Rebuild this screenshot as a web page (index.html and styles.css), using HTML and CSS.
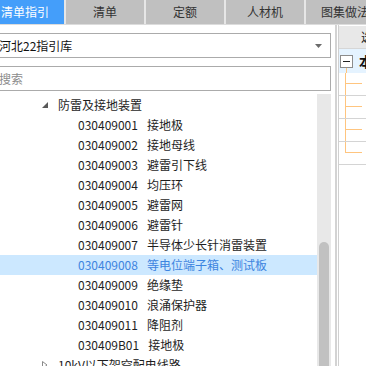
FILE: index.html
```html
<!DOCTYPE html>
<html lang="zh-CN">
<head>
    <meta charset="UTF-8">
    <title>清单指引</title>
    <link rel="stylesheet" href="styles.css">
</head>
<body>
<div class="app">

    <!-- Tabs -->
    <div class="tabs">
        <div class="tab active">清单指引</div>
        <div class="tab">清单</div>
        <div class="tab">定额</div>
        <div class="tab">人材机</div>
        <div class="tab">图集做法</div>
    </div>

    <div class="main">
        <!-- Left: guide library tree -->
        <div class="left">
            <div class="select">
                <span>河北22指引库</span>
                <svg class="select-arrow" width="7" height="4" viewBox="0 0 7 4"><path d="M0 0H7L3.5 4Z" fill="#6b6b6b"/></svg>
            </div>
            <div class="search">搜索</div>

            <div class="tree-wrap">
                <ul class="tree">
                    <li class="row level1">
                        <svg class="twisty" width="6" height="6" viewBox="0 0 6 6"><path d="M6 0V6H0Z" fill="#595959"/></svg>
                        <span>防雷及接地装置</span>
                    </li>
                    <li class="row level2"><span class="code">030409001</span><span class="name">接地极</span></li>
                    <li class="row level2"><span class="code">030409002</span><span class="name">接地母线</span></li>
                    <li class="row level2"><span class="code">030409003</span><span class="name">避雷引下线</span></li>
                    <li class="row level2"><span class="code">030409004</span><span class="name">均压环</span></li>
                    <li class="row level2"><span class="code">030409005</span><span class="name">避雷网</span></li>
                    <li class="row level2"><span class="code">030409006</span><span class="name">避雷针</span></li>
                    <li class="row level2"><span class="code">030409007</span><span class="name">半导体少长针消雷装置</span></li>
                    <li class="row level2 selected"><span class="code">030409008</span><span class="name">等电位端子箱、测试板</span></li>
                    <li class="row level2"><span class="code">030409009</span><span class="name">绝缘垫</span></li>
                    <li class="row level2"><span class="code">030409010</span><span class="name">浪涌保护器</span></li>
                    <li class="row level2"><span class="code">030409011</span><span class="name">降阻剂</span></li>
                    <li class="row level2"><span class="code">030409B01</span><span class="name">接地极</span></li>
                    <li class="row level1">
                        <svg class="twisty" width="6" height="8" viewBox="0 0 6 8"><path d="M0.5 0.5L5 4L0.5 7.5Z" fill="none" stroke="#8a8a8a"/></svg>
                        <span>10kV以下架空配电线路</span>
                    </li>
                </ul>
                <div class="scrollbar">
                    <svg class="scroll-up" width="10" height="5" viewBox="0 0 10 5"><path d="M5 0L10 5H0Z" fill="#666a70"/></svg>
                    <div class="thumb"></div>
                </div>
            </div>
        </div>

        <div class="splitter"></div>

        <!-- Right: selected item structure -->
        <div class="right">
            <div class="grid-head">选择</div>
            <div class="grid-row node-row">
                <span class="minus"></span>
                <b>本</b>
            </div>
            <div class="grid-row"><span class="guide"></span></div>
            <div class="grid-row"><span class="guide"></span></div>
            <div class="grid-row"><span class="guide"></span></div>
            <div class="grid-row"><span class="guide last"></span></div>
        </div>
    </div>
</div>
</body>
</html>
```

FILE: styles.css
```css
html, body {
    margin: 0;
    padding: 0;
    width: 366px;
    height: 366px;
    overflow: hidden;
    background: #fff;
}

body {
    font-family: "Noto Sans CJK SC", "Noto Sans", sans-serif;
    font-size: 12px;
    color: #1e1e1e;
}

/* the window is scrolled a little to the right */
.app {
    width: 380px;
    margin-left: -14px;
}

/* Tabs */
.tabs {
    display: flex;
    gap: 2px;
    height: 24px;
    background: #e6e6e6;
    border-bottom: 1px solid #dcdcdc;
}

.tab {
    width: 78px;
    flex-shrink: 0;
    background: #c0c0c0;
    color: #333;
    text-align: center;
    line-height: 24px;
    white-space: nowrap;
}

.tab.active {
    background: #449efa;
    color: #fff;
}

.main {
    display: flex;
    height: 341px;
}

/* Left panel */
.left {
    width: 349px;
    flex-shrink: 0;
    display: flex;
    flex-direction: column;
}

.select, .search {
    height: 23px;
    margin: 8px 4px 0 2px;
    border: 1px solid #ababab;
    display: flex;
    align-items: center;
    padding-left: 10px;
    line-height: 23px;
}

.select {
    justify-content: space-between;
    padding-right: 8px;
    color: #111;
}

.select-arrow {
    margin-top: 1px;
}

.search {
    color: #8c8c8c;
}

.tree-wrap {
    flex: 1;
    display: flex;
    margin: 3px 4px 0 2px;
    overflow: hidden;
}

.tree {
    list-style: none;
    margin: 0;
    padding: 1px 0 0;
    flex: 1;
    min-width: 0;
}

.row {
    height: 20px;
    line-height: 20px;
    display: flex;
    align-items: center;
    white-space: nowrap;
}

.row.level1 {
    padding-left: 54px;
}

.row.level1 .twisty {
    width: 6px;
    margin-right: 10px;
    flex-shrink: 0;
}

.row.level2 {
    padding-left: 90px;
}

.row .name {
    margin-left: 9px;
}

.row.selected {
    background: #cce8ff;
    color: #3d84e0;
}

.scrollbar {
    width: 14px;
    flex-shrink: 0;
    background: #e8e8e8;
    display: flex;
    flex-direction: column;
    align-items: center;
}

.scroll-up {
    margin-top: 4px;
    margin-left: 1px;
}

.thumb {
    width: 10px;
    height: 140px;
    flex-shrink: 0;
    margin-top: 144px;
    background: #c1c1c1;
    border-radius: 5px 5px 0 0;
}

/* Splitter */
.splitter {
    width: 2px;
    flex-shrink: 0;
    margin-right: 1px;
    background: #d3d3d3;
}

/* Right panel */
.right {
    flex: 1;
    min-width: 0;
    overflow: hidden;
    padding-top: 1px;
    border-left: 1px solid #d0d0d0;
}

.grid-head {
    height: 22px;
    line-height: 22px;
    background: #e8e8e8;
    padding-left: 22px;
    border-bottom: 1px solid #d6d6d6;
    color: #222;
    white-space: nowrap;
}

.grid-row {
    height: 22px;
    border-bottom: 1px solid #d4d4d4;
    display: flex;
}

.node-row {
    height: 24px;
    border-bottom: none;
    align-items: center;
    background: linear-gradient(#ffc57f, #ffc57f) 7px 17px / 1px 7px no-repeat, #e5f3ff;
}

.minus {
    width: 11px;
    height: 11px;
    flex-shrink: 0;
    margin-left: 1px;
    border: 1px solid #8c8c8c;
    background: linear-gradient(#222, #222) center / 7px 1px no-repeat, #fff;
}

.node-row b {
    margin-left: 6px;
    font-size: 14px;
    color: #111;
    white-space: nowrap;
}

.guide {
    width: 17px;
    flex-shrink: 0;
    margin-left: 6px;
    background:
        linear-gradient(#ffc57f, #ffc57f) 0 0 / 1px 100% no-repeat,
        linear-gradient(#ffc57f, #ffc57f) 0 10px / 17px 1px no-repeat;
}

.guide.last {
    background:
        linear-gradient(#ffc57f, #ffc57f) 0 0 / 1px 11px no-repeat,
        linear-gradient(#ffc57f, #ffc57f) 0 10px / 17px 1px no-repeat;
}
```
